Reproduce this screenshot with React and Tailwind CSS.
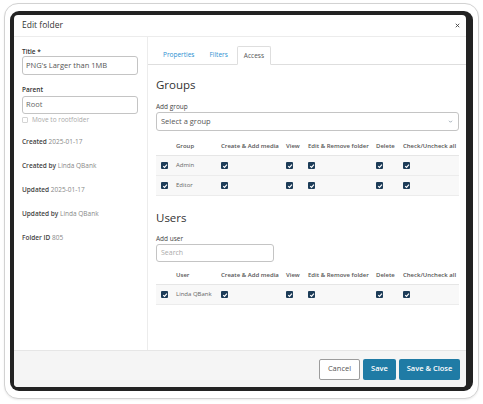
import React from "react";

function Check() {
  return (
    <span className="inline-flex h-[7px] w-[7px] items-center justify-center rounded-[1px] bg-[#1d3c58]">
      <svg viewBox="0 0 10 10" className="h-[6px] w-[6px]">
        <path d="M2 5.3 L4.2 7.4 L8.2 2.8" fill="none" stroke="white" strokeWidth="1.9" />
      </svg>
    </span>
  );
}

const cols = "grid grid-cols-[20px_45px_65px_22px_68px_27px_1fr] items-center";

function PermTable({ first, rows, mt }) {
  return (
    <div className={mt + " w-[303px]"}>
      <div className={cols + " h-[19px] border-b border-[#e6e6e6] text-[6px] font-semibold text-[#555]"}>
        <span />
        <span>{first}</span>
        <span>Create &amp; Add media</span>
        <span>View</span>
        <span>Edit &amp; Remove folder</span>
        <span>Delete</span>
        <span>Check/Uncheck all</span>
      </div>
      {rows.map((r) => (
        <div key={r} className={cols + " h-[20px] border-b border-[#ececec] bg-[#f8f8f8] text-[6px] text-[#666]"}>
          <span className="flex pl-[5px]"><Check /></span>
          <span>{r}</span>
          <span className="flex"><Check /></span>
          <span className="flex"><Check /></span>
          <span className="flex"><Check /></span>
          <span className="flex"><Check /></span>
          <span className="flex"><Check /></span>
        </div>
      ))}
    </div>
  );
}

function Meta({ label, value, mt }) {
  return (
    <div className={mt + " text-[6.5px] leading-[9px]"}>
      <span className="font-semibold text-[#444]">{label}</span>{" "}
      <span className="text-[#888]">{value}</span>
    </div>
  );
}

export default function App() {
  return (
    <div className="h-[404px] w-[483px] overflow-hidden bg-white font-['Open_Sans','Noto_Sans',sans-serif]">
      <div className="ml-[4px] mt-[3px] h-[396px] w-[475px] rounded-[14px] border border-[#d2d2d2] bg-white shadow-[0_1px_2px_rgba(0,0,0,0.08)]">
        <div className="ml-[5px] mt-[7px] h-[380px] w-[463px] rounded-[9px] bg-[#232323] pb-[4px] pl-[4px] pr-[7px] pt-[4px]">
          <div className="flex h-[372px] w-[452px] flex-col overflow-hidden rounded-[4px] bg-white">
            {/* header */}
            <div className="flex h-[22px] shrink-0 items-center justify-between border-b border-[#ececec] pl-[8px] pr-[6px]">
              <span className="text-[8.5px] text-[#333]">Edit folder</span>
              <svg viewBox="0 0 10 10" className="h-[5px] w-[5px]">
                <path d="M1.5 1.5 L8.5 8.5 M8.5 1.5 L1.5 8.5" stroke="#444" strokeWidth="1.8" />
              </svg>
            </div>
            {/* body */}
            <div className="flex h-[313px] shrink-0">
              {/* left */}
              <div className="w-[134px] shrink-0 border-r border-[#ececec] pl-[8px] pr-[9px] pt-[10px]">
                <div className="text-[6.5px] font-semibold leading-[9px] text-[#333]">Title *</div>
                <div className="flex h-[19px] items-center rounded-[3px] border border-[#c4c4c4] pl-[3px] text-[7.5px] text-[#555]">
                  PNG's Larger than 1MB
                </div>
                <div className="mt-[10px] text-[6.5px] font-semibold leading-[9px] text-[#333]">Parent</div>
                <div className="mt-[2px] flex h-[18px] items-center rounded-[3px] border border-[#c4c4c4] pl-[3px] text-[7.5px] text-[#666]">
                  Root
                </div>
                <div className="mt-[2px] flex items-center gap-[4px] text-[6.5px] leading-[8px] text-[#aaa]">
                  <span className="h-[6px] w-[6px] rounded-[1px] border border-[#d4d4d4]" />
                  Move to rootfolder
                </div>
                <Meta mt="mt-[13px]" label="Created" value="2025-01-17" />
                <Meta mt="mt-[15px]" label="Created by" value="Linda QBank" />
                <Meta mt="mt-[15px]" label="Updated" value="2025-01-17" />
                <Meta mt="mt-[15px]" label="Updated by" value="Linda QBank" />
                <Meta mt="mt-[15px]" label="Folder ID" value="805" />
              </div>
              {/* right */}
              <div className="flex flex-1 flex-col">
                <div className="flex h-[28px] shrink-0 items-end gap-[3px] border-b border-[#dedede] pl-[9px]">
                  <div className="flex h-[19px] items-center px-[6px] text-[6.5px] text-[#2b8fd1]">Properties</div>
                  <div className="flex h-[19px] items-center px-[6px] text-[6.5px] text-[#2b8fd1]">Filters</div>
                  <div className="-mb-px flex h-[19px] items-center rounded-t-[2px] border border-[#dedede] border-b-white bg-white px-[6px] text-[6.5px] text-[#555]">
                    Access
                  </div>
                </div>
                <div className="pl-[8px] pr-[7px]">
                  <div className="mt-[12px] text-[11.5px] font-medium leading-[16px] text-[#333]">Groups</div>
                  <div className="mt-[9px] text-[6.5px] leading-[9px] text-[#444]">Add group</div>
                  <div className="mt-[1px] flex h-[19px] items-center justify-between rounded-[3px] border border-[#c4c4c4] pl-[4px] pr-[5px] text-[7.5px] text-[#555]">
                    <span>Select a group</span>
                    <svg viewBox="0 0 10 10" className="h-[5px] w-[5px]">
                      <path d="M2 3.5 L5 6.5 L8 3.5" fill="none" stroke="#7a8a99" strokeWidth="1.4" />
                    </svg>
                  </div>
                  <PermTable mt="mt-[6px]" first="Group" rows={["Admin", "Editor"]} />
                  <div className="mt-[14px] text-[11.5px] font-medium leading-[16px] text-[#333]">Users</div>
                  <div className="mt-[8px] text-[6.5px] leading-[9px] text-[#444]">Add user</div>
                  <div className="mt-[1px] flex h-[18px] w-[118px] items-center rounded-[3px] border border-[#c4c4c4] pl-[4px] text-[7px] text-[#aaa]">
                    Search
                  </div>
                  <PermTable mt="mt-[4px]" first="User" rows={["Linda QBank"]} />
                </div>
              </div>
            </div>
            {/* footer */}
            <div className="flex h-[37px] shrink-0 items-center justify-end gap-[3px] border-t border-[#e6e6e6] bg-[#f5f5f5] pr-[6px]">
              <button className="flex h-[21px] w-[41px] items-center justify-center rounded-[2px] border border-[#9c9c9c] bg-white text-[7.5px] text-[#555]">
                Cancel
              </button>
              <button className="flex h-[21px] w-[33px] items-center justify-center rounded-[2px] bg-[#1f7ba5] text-[7.5px] font-semibold text-white">
                Save
              </button>
              <button className="flex h-[21px] w-[61px] items-center justify-center rounded-[2px] bg-[#1f7ba5] text-[7.5px] font-semibold text-white">
                Save &amp; Close
              </button>
            </div>
          </div>
        </div>
      </div>
    </div>
  );
}
